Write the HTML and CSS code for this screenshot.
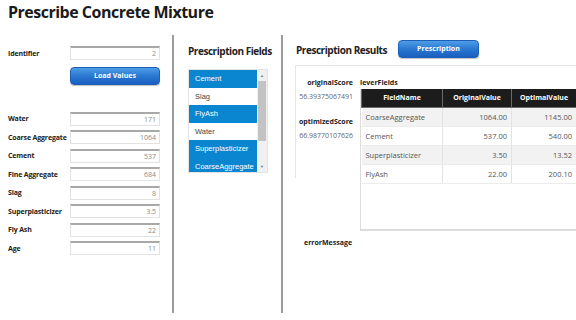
FILE: index.html
```html
<!DOCTYPE html>
<html lang="en">
<head>
  <meta charset="UTF-8" />
  <title>Prescribe Concrete Mixture</title>
  <link rel="stylesheet" href="styles.css">
</head>
<body>
  <h1 class="title">Prescribe Concrete Mixture</h1>

  <div class="main">
    <!-- Inputs -->
    <section class="col col-inputs">
      <div class="field">
        <label>Identifier</label>
        <input class="num" type="text" value="2" readonly>
      </div>
      <button class="btn btn-load">Load Values</button>

      <div class="mix">
        <div class="field"><label>Water</label><input class="num" type="text" value="171" readonly></div>
        <div class="field"><label>Coarse Aggregate</label><input class="num" type="text" value="1064" readonly></div>
        <div class="field"><label>Cement</label><input class="num" type="text" value="537" readonly></div>
        <div class="field"><label>Fine Aggregate</label><input class="num" type="text" value="684" readonly></div>
        <div class="field"><label>Slag</label><input class="num" type="text" value="8" readonly></div>
        <div class="field"><label>Superplasticizer</label><input class="num" type="text" value="3.5" readonly></div>
        <div class="field"><label>Fly Ash</label><input class="num" type="text" value="22" readonly></div>
        <div class="field"><label>Age</label><input class="num" type="text" value="11" readonly></div>
      </div>
    </section>

    <!-- Prescription fields list -->
    <section class="col col-fields">
      <h2 class="heading">Prescription Fields</h2>
      <div class="listbox">
        <ul class="items">
          <li class="selected">Cement</li>
          <li>Slag</li>
          <li class="selected">FlyAsh</li>
          <li>Water</li>
          <li class="selected">Superplasticizer</li>
          <li class="selected">CoarseAggregate</li>
        </ul>
        <div class="scrollbar">
          <span class="arrow">&#9650;</span>
          <div class="track"><div class="thumb"></div></div>
          <span class="arrow">&#9660;</span>
        </div>
      </div>
    </section>

    <!-- Results -->
    <section class="col col-results">
      <div class="results-head">
        <h2 class="heading">Prescription Results</h2>
        <button class="btn btn-prescribe">Prescription</button>
      </div>

      <div class="results">
        <div class="scores">
          <div class="key">originalScore</div>
          <div class="val">56.39375067491</div>
          <div class="key key-gap">optimizedScore</div>
          <div class="val">66.98770107626</div>
        </div>
        <div class="lever">
          <div class="key">leverFields</div>
          <div class="grid">
            <table>
              <thead>
                <tr><th class="c1">FieldName</th><th class="c2">OriginalValue</th><th class="c3">OptimalValue</th></tr>
              </thead>
              <tbody>
                <tr><td>CoarseAggregate</td><td class="r">1064.00</td><td class="r">1145.00</td></tr>
                <tr><td>Cement</td><td class="r">537.00</td><td class="r">540.00</td></tr>
                <tr><td>Superplasticizer</td><td class="r">3.50</td><td class="r">13.52</td></tr>
                <tr><td>FlyAsh</td><td class="r">22.00</td><td class="r">200.10</td></tr>
              </tbody>
            </table>
          </div>
        </div>
      </div>

      <div class="error key">errorMessage</div>
    </section>
  </div>
</body>
</html>
```

FILE: styles.css
```css
* {
  box-sizing: border-box;
}

body {
  margin: 0;
  width: 576px;
  height: 320px;
  overflow: hidden;
  background: #fff;
  color: #222;
  font-family: "Open Sans", "Noto Sans", sans-serif;
}

.title {
  margin: 0;
  padding: 1px 0 0 8px;
  height: 35px;
  font-size: 16px;
  font-weight: 700;
  letter-spacing: -0.5px;
  color: #1a1a1a;
}

.main {
  display: flex;
  height: 278px;
}

.col {
  height: 100%;
  flex-shrink: 0;
}

/* left column */
.col-inputs {
  width: 174px;
  padding: 9px 0 0 8px;
  border-right: 2px solid #9c9c9c;
}

.field {
  display: flex;
  align-items: center;
  height: 18.5px;
}

.field label {
  width: 62px;
  font-size: 7px;
  font-weight: 700;
  letter-spacing: -0.15px;
  white-space: nowrap;
  color: #222;
}

.num {
  width: 90px;
  height: 14px;
  margin: 0;
  padding: 0 3px;
  border: 1px solid #e2e2e2;
  border-top: 2px solid #a8a8a8;
  background: #fff;
  text-align: right;
  font-family: inherit;
  font-size: 7px;
  color: #8a8a8a;
  outline: none;
}

.btn {
  display: block;
  border: 1px solid #1b5fb8;
  border-radius: 4px;
  background: linear-gradient(#4e9de6, #2a78d2 50%, #1a5fc0);
  color: #fff;
  font-family: inherit;
  font-size: 7px;
  font-weight: 700;
  cursor: pointer;
  box-shadow: 0 1px 1px rgba(0, 0, 0, 0.25);
}

.btn-load {
  width: 90px;
  height: 18px;
  margin: 4px 0 0 62px;
}

.mix {
  margin-top: 25px;
}

/* middle column */
.col-fields {
  width: 109px;
  padding: 9px 0 0 14px;
  border-right: 2px solid #9c9c9c;
}

.heading {
  margin: 0;
  font-size: 10px;
  font-weight: 700;
  letter-spacing: -0.45px;
  white-space: nowrap;
  color: #222;
}

.listbox {
  display: flex;
  width: 80px;
  height: 104px;
  margin-top: 11px;
  border: 1px solid #e4e4e4;
  overflow: hidden;
}

.items {
  flex: 1;
  margin: 0;
  padding: 0;
  list-style: none;
  font-family: "Liberation Sans", Arial, sans-serif;
  font-size: 7.5px;
}

.items li {
  height: 17.6px;
  line-height: 17.6px;
  padding-left: 6px;
  color: #444;
  white-space: nowrap;
}

.items li.selected {
  background: #0a86d0;
  color: #fff;
}

.scrollbar {
  display: flex;
  flex-direction: column;
  width: 10px;
  background: #f0f0f0;
}

.scrollbar .arrow {
  height: 11px;
  font-size: 4px;
  line-height: 11px;
  text-align: center;
  color: #777;
}

.track {
  flex: 1;
}

.thumb {
  height: 60px;
  margin: 0 1px;
  background: #c3c3c3;
}

/* right column */
.col-results {
  flex: 1 1 auto;
  min-width: 0;
  padding: 3px 0 0 12px;
}

.results-head {
  display: flex;
  align-items: center;
  gap: 11px;
  height: 21px;
  padding-left: 1px;
}

.results-head .heading {
  padding-top: 2px;
}

.btn-prescribe {
  width: 81px;
  height: 18px;
}

.results {
  display: flex;
  height: 113px;
  margin-top: 6px;
  border-top: 1px solid #e6e6e6;
  border-left: 1px solid #e6e6e6;
}

.key {
  font-size: 7px;
  font-weight: 700;
  white-space: nowrap;
  color: #222;
}

.val {
  font-size: 7px;
  color: #666;
  margin-top: 5px;
}

.scores {
  flex-shrink: 0;
  width: 57px;
  padding-top: 12px;
  text-align: right;
}

.key-gap {
  margin-top: 16px;
}

.lever {
  flex-shrink: 0;
  padding: 12px 0 0 7px;
}

.grid {
  width: 216px;
  height: 142px;
  margin-top: 2px;
  border-left: 1px solid #dcdcdc;
  border-bottom: 2px solid #dcdcdc;
  overflow: hidden;
}

table {
  border-collapse: collapse;
  table-layout: fixed;
  width: 215px;
  font-size: 7.5px;
}

th {
  height: 18px;
  background: #1c1c1c;
  color: #fff;
  font-size: 7px;
  font-weight: 700;
  border: 1px solid #6a6a6a;
  border-top: 0;
}

.c1 { width: 81px; }
.c2 { width: 69px; }
.c3 { width: 65px; }

td {
  height: 19px;
  padding: 0 4px;
  color: #555;
  border-right: 1px solid #e2e2e2;
  border-bottom: 1px solid #ececec;
}

tbody tr:nth-child(odd) td {
  background: #f2f2f2;
}

td.r {
  text-align: right;
}

.error {
  margin: 60px 0 0 9px;
}
```
